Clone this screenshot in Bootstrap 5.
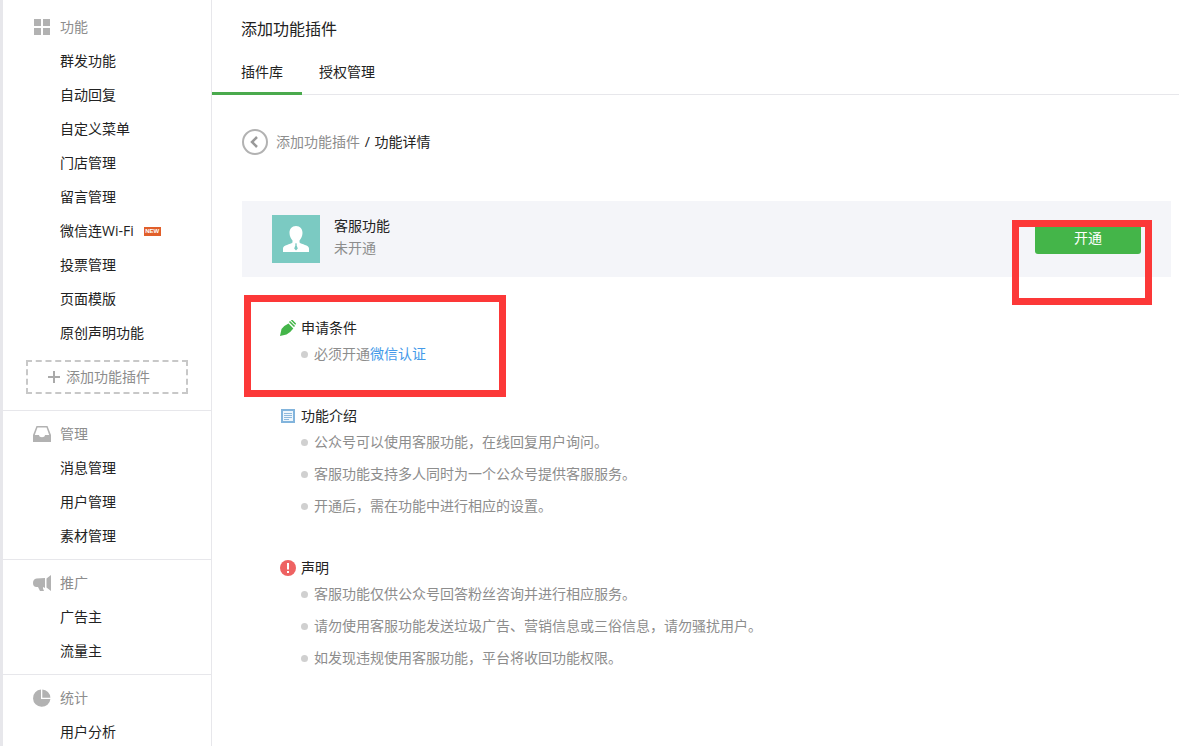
<!DOCTYPE html>
<html lang="zh-CN">
<head>
<meta charset="utf-8">
<meta name="viewport" content="width=device-width, initial-scale=1">
<title>添加功能插件</title>
<link rel="stylesheet" href="https://cdn.jsdelivr.net/npm/bootstrap@5.3.0/dist/css/bootstrap.min.css">
<style>
body { font-family: "Open Sans", "Noto Sans CJK SC", sans-serif; font-size: 14px; line-height: 20px; color: #222; background: #fff; }
a { color: inherit; text-decoration: none; }
.page-shell { border-left: 3px solid #e7e7eb; }
.side-menu { width: 209px; border-right: 1px solid #e7e7eb; }
.menu-group { padding: 6px 0; border-bottom: 1px solid #e7e7eb; }
.menu-group:first-child { padding-top: 10px; }
.menu-title { height: 34px; padding-left: 29px; gap: 8px; color: #8d8d8d; font-size: 14px; }
.menu-title svg { width: 20px; height: 20px; fill: #b2b2b2; }
.menu-group li a { display: flex; align-items: center; height: 34px; padding-left: 57px; gap: 10px; }
.tag-new { width: 17px; height: 9px; background: #e15f2a; color: #fff; font: bold 6px/9px "Liberation Sans", sans-serif; text-align: center; }
.add-plugin { width: 162px; height: 34px; margin: 10px 0 10px 23px; padding: 0 20px; gap: 6px; border: 2px dashed #c8c8c8; background: transparent; color: #8d8d8d; }
.page-head { border-bottom: 1px solid #e7e7eb; padding-top: 17px; }
.page-head h1 { font-size: 16px; line-height: 24px; font-weight: 400; padding-left: 29px; margin-bottom: 17px; }
.tab-link { padding: 4px 18px 10px 17px; height: 37px; border-bottom: 3px solid transparent; margin-bottom: -1px; }
.tab-link:first-child { padding-left: 29px; padding-right: 19px; }
.tab-link.active { border-color: #4aaa4d; }
.content-area { padding: 34px 8px 40px 30px; }
.crumbs { gap: 8px; margin-bottom: 46px; }
.crumb-slash { margin: 0 1px; }
.muted-text { color: #8d8d8d; }
.plugin-bar { background: #f4f5f9; height: 76px; padding: 0 30px; gap: 14px; }
.plugin-text { padding-bottom: 4px; }
.plugin-bar p { line-height: 22px; }
.open-btn { width: 106px; height: 32px; padding: 0; border: 0; border-radius: 3px; background: #44b549; color: #fff; font-size: 14px; line-height: 32px; }
.open-wrap { margin-top: -2px; }
.mark-box { position: absolute; border: 7px solid #fc3838; pointer-events: none; }
.mark-action { top: -2px; right: -11px; width: 140px; height: 85px; }
.mark-terms { top: -23px; left: -36px; width: 262px; height: 102px; }
.detail-list { padding: 41px 0 0 38px; }
.detail-list section { position: relative; margin-bottom: 36px; }
.detail-list h2 { font-size: 14px; line-height: 20px; font-weight: 400; gap: 5px; }
.detail-list li { display: flex; align-items: center; height: 32px; padding-left: 21px; gap: 6px; color: #8d8d8d; }
.detail-list li::before { content: ""; width: 7px; height: 7px; border-radius: 50%; background: #d0d0d0; }
.detail-list li span a { color: #459ae9; }
</style>
<script src="https://cdn.jsdelivr.net/npm/bootstrap@5.3.0/dist/js/bootstrap.bundle.min.js"></script>
</head>
<body>
<div class="page-shell d-flex vh-100 overflow-hidden">
  <nav class="side-menu flex-shrink-0">
    <div class="menu-group">
      <h2 class="menu-title d-flex align-items-center fw-normal m-0"><svg viewBox="0 0 20 20"><path d="M2 2h7v7H2zM11 2h7v7h-7zM2 11h7v7H2zM11 11h7v7h-7z"/></svg>功能</h2>
      <ul class="list-unstyled m-0">
        <li><a href="#">群发功能</a></li>
        <li><a href="#">自动回复</a></li>
        <li><a href="#">自定义菜单</a></li>
        <li><a href="#">门店管理</a></li>
        <li><a href="#">留言管理</a></li>
        <li><a href="#">微信连Wi-Fi<span class="tag-new">NEW</span></a></li>
        <li><a href="#">投票管理</a></li>
        <li><a href="#">页面模版</a></li>
        <li><a href="#">原创声明功能</a></li>
      </ul>
      <button type="button" class="add-plugin d-flex align-items-center"><svg width="12" height="12" viewBox="0 0 12 12"><path d="M0 6h12M6 0v12" stroke="#aaa" stroke-width="2"/></svg>添加功能插件</button>
    </div>
    <div class="menu-group">
      <h2 class="menu-title d-flex align-items-center fw-normal m-0"><svg viewBox="0 0 20 20"><path fill-rule="evenodd" d="M4.500 2h11L19 11v7H1v-7zM5.500 3.500L2.800 11H7c0 3 6 3 6 0h4.200L14.500 3.500z"/></svg>管理</h2>
      <ul class="list-unstyled m-0">
        <li><a href="#">消息管理</a></li>
        <li><a href="#">用户管理</a></li>
        <li><a href="#">素材管理</a></li>
      </ul>
    </div>
    <div class="menu-group">
      <h2 class="menu-title d-flex align-items-center fw-normal m-0"><svg viewBox="0 0 20 20"><path d="M13 5v10l-2-1v1.500l1 2.500H8l-2-4H4.500Q1 14 1 10t3.500-4.500zM19 2v16l-4.500-3.500v-9z"/></svg>推广</h2>
      <ul class="list-unstyled m-0">
        <li><a href="#">广告主</a></li>
        <li><a href="#">流量主</a></li>
      </ul>
    </div>
    <div class="menu-group">
      <h2 class="menu-title d-flex align-items-center fw-normal m-0"><svg viewBox="0 0 20 20"><path d="M9 1.500V11h9.400A8.700 8.700 0 1 1 9 1.500zM10.300 1.500a8.600 8.600 0 0 1 8.100 8.200h-8.100z"/></svg>统计</h2>
      <ul class="list-unstyled m-0">
        <li><a href="#">用户分析</a></li>
      </ul>
    </div>
  </nav>
  <main class="flex-grow-1">
    <header class="page-head">
      <h1>添加功能插件</h1>
      <div class="d-flex">
        <a class="tab-link active" href="#">插件库</a>
        <a class="tab-link" href="#">授权管理</a>
      </div>
    </header>
    <div class="content-area">
      <div class="crumbs d-flex align-items-center">
        <a href="#" class="d-flex" aria-label="返回"><svg width="26" height="26" viewBox="0 0 26 26" fill="none" stroke="#b2b2b2"><circle cx="13" cy="13" r="12" stroke-width="2"/><path d="M15 8l-5 5 5 5" stroke="#999" stroke-width="2.500"/></svg></a>
        <div><a href="#" class="muted-text">添加功能插件</a> <span class="crumb-slash">/</span> 功能详情</div>
      </div>
      <div class="plugin-bar d-flex align-items-center">
        <svg width="48" height="48" viewBox="0 0 48 48"><path fill="#7bcac2" d="M0 0h48v48H0z"/><path fill="#fff" d="M24 11c4.200 0 6.500 3 6.500 7 0 3-1.500 5.500-3 7.500v2c2 2 9.500 2.500 9.500 6V37H11v-3.500c0-3.500 7.500-4 9.500-6v-2c-1.500-2-3-4.500-3-7.500 0-4 2.300-7 6.500-7z"/><path fill="#7bcac2" d="M23 28.500h2l-.5 1.500 1.300 3.500L24 35.500l-1.800-2L23.500 30z"/></svg>
        <div class="plugin-text flex-grow-1">
          <p class="m-0">客服功能</p>
          <p class="m-0 muted-text">未开通</p>
        </div>
        <div class="open-wrap position-relative">
          <button type="button" class="open-btn d-block">开通</button>
          <div class="mark-box mark-action"></div>
        </div>
      </div>
      <div class="detail-list">
        <section>
          <h2 class="d-flex align-items-center m-0"><svg width="16" height="16" viewBox="0 0 16 16"><path fill="#44b549" d="M0 16L1.500 9Q4 5.500 8.500 3.500l4.800 5Q10 13 6.500 14.500z"/><path d="M9.500 1.500l5 5M11.500 0l4.200 4.200" stroke="#44b549" stroke-width="1.500"/></svg>申请条件</h2>
          <ul class="list-unstyled m-0">
            <li><span>必须开通<a href="#">微信认证</a></span></li>
          </ul>
          <div class="mark-box mark-terms"></div>
        </section>
        <section>
          <h2 class="d-flex align-items-center m-0"><svg width="16" height="16" viewBox="0 0 16 16"><path fill="#eef6fc" stroke="#82b4dc" stroke-width="2" d="M2 2h12v12H2z"/><path stroke="#8fb9dc" d="M4 5.500h8M4 7.500h8M4 9.500h8M4 11.500h5"/></svg>功能介绍</h2>
          <ul class="list-unstyled m-0">
            <li>公众号可以使用客服功能，在线回复用户询问。</li>
            <li>客服功能支持多人同时为一个公众号提供客服服务。</li>
            <li>开通后，需在功能中进行相应的设置。</li>
          </ul>
        </section>
        <section>
          <h2 class="d-flex align-items-center m-0"><svg width="16" height="16" viewBox="0 0 16 16"><circle cx="8" cy="8" r="8" fill="#ee6262"/><path fill="#fff" d="M7 3h2v6.500H7zM7 11h2v2H7z"/></svg>声明</h2>
          <ul class="list-unstyled m-0">
            <li>客服功能仅供公众号回答粉丝咨询并进行相应服务。</li>
            <li>请勿使用客服功能发送垃圾广告、营销信息或三俗信息，请勿骚扰用户。</li>
            <li>如发现违规使用客服功能，平台将收回功能权限。</li>
          </ul>
        </section>
      </div>
    </div>
  </main>
</div>
</body>
</html>
